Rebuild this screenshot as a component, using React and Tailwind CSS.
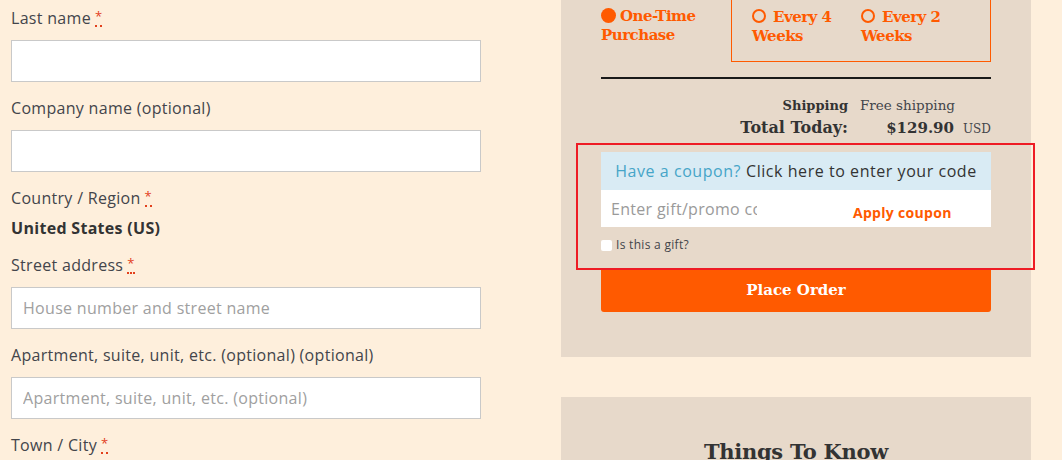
import React from "react";

const sans = { fontFamily: '"Open Sans", "Liberation Sans", sans-serif' };
const slab = { fontFamily: '"DejaVu Serif", "Liberation Serif", serif' };

function Req() {
  return (
    <abbr className="text-[#e2401c] no-underline border-b-2 border-dotted border-[#e2401c] text-[13px] leading-[13px] ml-[4px] relative -top-[3px]" title="required">*</abbr>
  );
}

function Field({ label, req, placeholder }) {
  return (
    <div className="mb-[15px]">
      <label className="block h-[22px] leading-[22px] mb-[11px] text-[16px] tracking-[0.3px] text-[#43454b]">
        {label}
        {req && <Req />}
      </label>
      <input
        className="block w-full h-[42px] bg-white border border-[#c9c9c9] px-[11px] text-[16px] tracking-[0.3px] text-[#333] placeholder:text-[#a0a0a0] outline-none"
        placeholder={placeholder}
        style={sans}
      />
    </div>
  );
}

function Radio({ filled }) {
  return filled ? (
    <span className="inline-block w-[15px] h-[15px] rounded-full bg-[#ff5a00] align-[-2px] mr-[4px]" />
  ) : (
    <span className="inline-block w-[14px] h-[14px] rounded-full border-2 border-[#ff5a00] align-[-1px] mr-[7px]" />
  );
}

export default function App() {
  return (
    <div className="w-[1062px] h-[460px] overflow-hidden bg-[#feefdc] relative" style={sans}>
      <div className="flex pl-[11px]">
        <div className="w-[470px] pt-[7px]">
          <Field label="Last name" req />
          <Field label="Company name (optional)" />
          <div className="mb-[15px]">
            <label className="block h-[22px] leading-[22px] mb-[8px] text-[16px] tracking-[0.3px] text-[#43454b]">
              Country / Region<Req />
            </label>
            <div className="h-[22px] leading-[22px] text-[16px] tracking-[0.3px] font-bold text-[#333]">United States (US)</div>
          </div>
          <Field label="Street address" req placeholder="House number and street name" />
          <Field label="Apartment, suite, unit, etc. (optional) (optional)" placeholder="Apartment, suite, unit, etc. (optional)" />
          <Field label="Town / City" req />
        </div>

        <div className="ml-[80px] w-[470px] flex flex-col gap-[40px]">
          <div className="bg-[#e7d9ca] px-[40px] pb-[45px] -mt-[30px]">
            <div className="flex text-[#ff5a00] text-[15px] font-bold leading-[19px]" style={slab}>
              <div className="w-[130px] pt-[37px] tracking-[-0.5px]">
                <Radio filled />One-Time Purchase
              </div>
              <div className="flex-1 border border-[#ff5a00] flex pl-[20px] pt-[37px] pb-[15px] tracking-[-0.5px]">
                <div className="w-[109px]"><Radio />Every 4 Weeks</div>
                <div className="w-[110px]"><Radio />Every 2 Weeks</div>
              </div>
            </div>
            <div className="h-[2px] bg-[#1a1a1a] mt-[15px]" />
            <div className="mt-[16px] text-[#333]" style={slab}>
              <div className="flex items-baseline leading-[20px]">
                <div className="w-[247px] text-right text-[13px] font-bold">Shipping</div>
                <div className="ml-[12px] text-[13.5px] text-[#43454b]">Free shipping</div>
              </div>
              <div className="flex items-baseline leading-[24px]">
                <div className="w-[247px] text-right text-[16px] font-bold">Total Today:</div>
                <div className="w-[106px] text-right text-[15px] font-bold">$129.90</div>
                <div className="ml-[9px] text-[12px] text-[#43454b]">USD</div>
              </div>
            </div>
            <div className="mt-[11px]">
              <div className="bg-[#d9ebf4] h-[38px] flex items-center justify-center text-[16px] tracking-[0.55px] text-[#333]">
                <span className="text-[#46a5c8]">Have a coupon?</span>
                <span className="ml-[5px]">Click here to enter your code</span>
              </div>
              <div className="bg-white h-[37px] flex items-center">
                <input
                  className="w-[156px] h-full pl-[10px] text-[16px] tracking-[0.3px] outline-none placeholder:text-[#9a9a9a]"
                  placeholder="Enter gift/promo code"
                  style={sans}
                />
                <span className="ml-[96px] mt-[7px] text-[14px] tracking-[0.3px] font-bold text-[#ff5a00]">Apply coupon</span>
              </div>
              <label className="flex items-center mt-[10px] h-[16px] text-[12px] tracking-[0.3px] text-[#43454b]">
                <span className="w-[11px] h-[11px] bg-white rounded-[2px] mr-[4px]" />
                Is this a gift?
              </label>
              <button className="mt-[16px] w-full h-[43px] bg-[#ff5a00] rounded-b-[3px] text-white text-[15px] font-bold" style={slab}>
                Place Order
              </button>
            </div>
          </div>
          <div className="bg-[#e7d9ca] h-[120px] pt-[39px] text-center">
            <h2 className="text-[21px] font-bold text-[#333] tracking-[-0.3px]" style={slab}>Things To Know</h2>
          </div>
        </div>
      </div>
      <div className="absolute left-[576px] top-[143px] w-[459px] h-[127px] border-2 border-[#ee1c24] pointer-events-none" />
    </div>
  );
}
